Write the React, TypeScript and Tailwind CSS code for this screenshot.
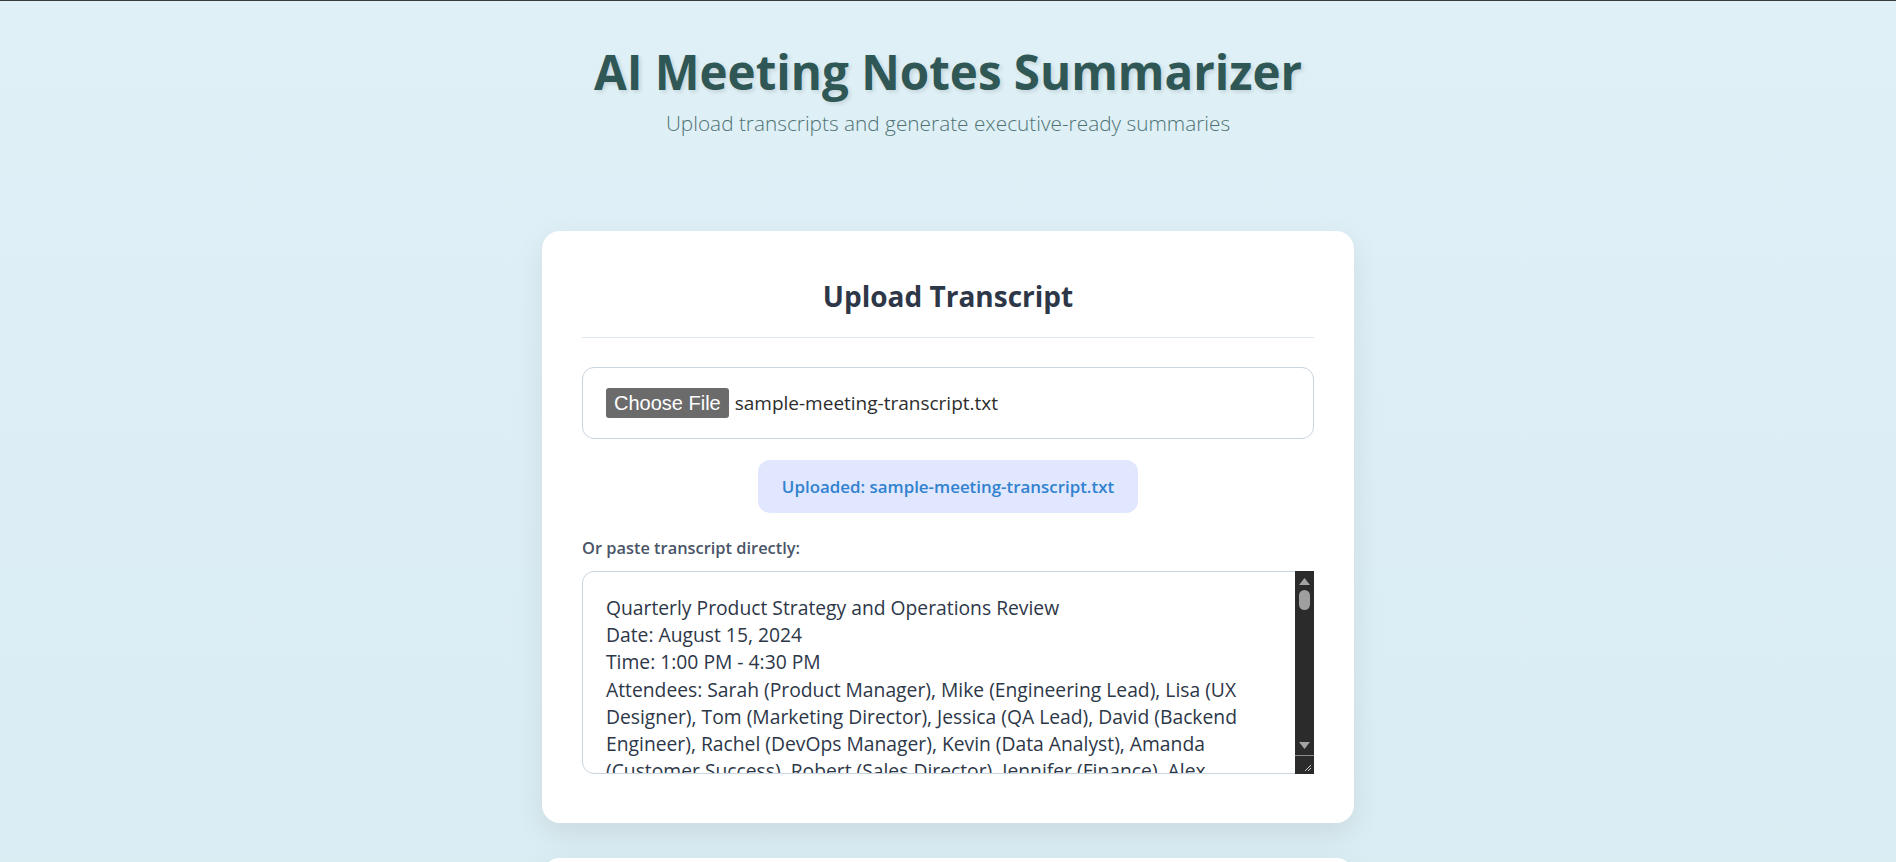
const font = "font-['Segoe_UI','Open_Sans','Noto_Sans',sans-serif]";

const transcriptLines = [
  'Quarterly Product Strategy and Operations Review',
  'Date: August 15, 2024',
  'Time: 1:00 PM - 4:30 PM',
  'Attendees: Sarah (Product Manager), Mike (Engineering Lead), Lisa (UX',
  'Designer), Tom (Marketing Director), Jessica (QA Lead), David (Backend',
  'Engineer), Rachel (DevOps Manager), Kevin (Data Analyst), Amanda',
  '(Customer Success), Robert (Sales Director), Jennifer (Finance), Alex',
];

function Scrollbar() {
  return (
    <div className="-my-px -mr-px flex w-[19px] shrink-0 flex-col bg-[#2b2b2b]">
      <div className="flex flex-1 flex-col items-center pt-[7px]">
        <svg width="11" height="7" viewBox="0 0 11 7">
          <path d="M5.5 0 L11 7 L0 7 Z" fill="#a3a3a3" />
        </svg>
        <div className="mt-[5px] h-[20px] w-[11px] rounded-full bg-[#9f9f9f]" />
        <div className="flex-1" />
        <svg width="11" height="7" viewBox="0 0 11 7" className="mb-[6px]">
          <path d="M0 0 L11 0 L5.5 7 Z" fill="#a3a3a3" />
        </svg>
      </div>
      <div className="flex h-[19px] items-end justify-end border-t border-[#8a8a8a] bg-[#2b2b2b] pr-[2px] pb-[2px]">
        <svg width="8" height="8" viewBox="0 0 8 8">
          <path d="M7 1 L1 7 M7 4 L4 7" stroke="#d0d0d0" strokeWidth="1" />
        </svg>
      </div>
    </div>
  );
}

export default function App() {
  return (
    <div className={`min-h-[862px] bg-gradient-to-b from-[#dff0f7] to-[#d9ecf2] ${font}`}>
      <div className="h-[1px] bg-[#3c3c3c]" />
      <header className="pt-[41px] text-center">
        <h1 className="text-[47.5px] leading-[60px] font-bold text-[#2f5755] [text-shadow:2px_2px_4px_rgba(0,0,0,0.12)]">
          AI Meeting Notes Summarizer
        </h1>
        <p className="mt-[6px] text-[20.8px] leading-[30px] font-light text-[#4f7374]">
          Upload transcripts and generate executive-ready summaries
        </p>
      </header>

      <main className="mx-auto mt-[93px] w-[812px]">
        <section className="mb-[35px] rounded-[18px] bg-white px-[40px] pt-[48px] pb-[49px] shadow-[0_10px_30px_rgba(0,0,0,0.08)]">
          <h2 className="border-b border-[#e2e8f0] pb-[23px] text-center text-[28px] leading-[35px] font-bold text-[#2d3748]">
            Upload Transcript
          </h2>

          <div className="mt-[29px] flex h-[72px] items-center rounded-[12px] border border-[#cbd5e0] pl-[23px]">
            <span className="rounded-[3px] bg-[#6b6b6b] px-[8px] py-[3px] font-['Liberation_Sans',Arial,sans-serif] text-[20px] leading-[24px] text-white">
              Choose File
            </span>
            <span className="ml-[6px] text-[19px] text-[#2d2d2d]">sample-meeting-transcript.txt</span>
          </div>

          <div className="mt-[21px] flex justify-center">
            <div className="flex h-[53px] items-center rounded-[12px] bg-[#e0e7ff] px-[24px] text-[16.9px] font-semibold text-[#3182ce]">
              Uploaded: sample-meeting-transcript.txt
            </div>
          </div>

          <label className="mt-[24px] block text-[16.4px] leading-[22px] font-semibold text-[#4a5568]">
            Or paste transcript directly:
          </label>

          <div className="mt-[12px] flex h-[203px] rounded-[12px] border border-[#cbd5e0]">
            <div className="flex-1 overflow-hidden rounded-l-[12px] pt-[22px] pl-[23px] text-[19.3px] leading-[27.2px] text-[#2d3748]">
              {transcriptLines.map((line) => (
                <div key={line} className="whitespace-nowrap">
                  {line}
                </div>
              ))}
            </div>
            <Scrollbar />
          </div>
        </section>

        <section className="h-[200px] rounded-[18px] bg-white shadow-[0_10px_30px_rgba(0,0,0,0.08)]" />
      </main>
    </div>
  );
}
